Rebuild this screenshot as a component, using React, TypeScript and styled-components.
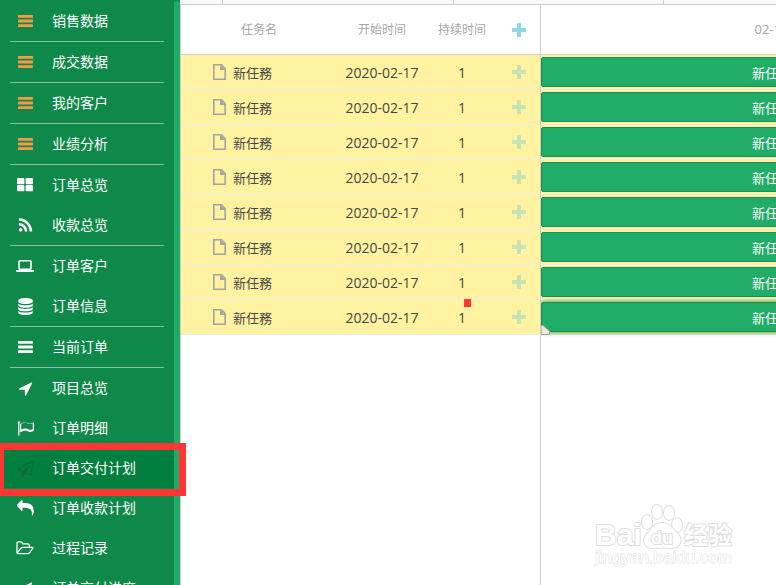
import React from "react";
import styled, { createGlobalStyle } from "styled-components";

const GlobalStyle = createGlobalStyle`
  *, *::before, *::after { box-sizing: border-box; }
  body {
    margin: 0;
    background: #ffffff;
    font-family: "Open Sans", "Noto Sans CJK SC", sans-serif;
  }
`;

const Shell = styled.div`
  position: relative;
  display: flex;
  height: 100vh;
  overflow: hidden;
`;

/* ---------- Sidebar ---------- */

const Sidebar = styled.nav`
  flex: none;
  display: flex;
  width: 180px;
  background: #0f894a;
`;

const Menu = styled.ul`
  flex: 1;
  margin: 0;
  padding: 1px 0 0;
  list-style: none;
`;

const ScrollTrack = styled.div`
  width: 6px;
  padding-top: 1px;
`;

const ScrollThumb = styled.div`
  height: 100%;
  border-radius: 3px 3px 0 0;
  background: #20ac66;
`;

const Divider = styled.li`
  height: 1px;
  margin: 0 10px;
  background: #85c1a1;
`;

const MenuLink = styled.a<{ $active?: boolean }>`
  display: flex;
  align-items: center;
  gap: 18px;
  height: 40px;
  padding-left: 16px;
  background: ${(p) => (p.$active ? "#007f3e" : "transparent")};
  color: #ffffff;
  font-family: "Noto Sans CJK SC", sans-serif;
  font-size: 14px;
  line-height: 20px;
  text-decoration: none;
  white-space: nowrap;
`;

const MenuLabel = styled.span`
  padding-bottom: 2px;
`;

const IconSlot = styled.span<{ $color: string }>`
  display: flex;
  justify-content: center;
  width: 18px;
  color: ${(p) => p.$color};
`;

const Glyph = styled.svg`
  display: block;
  fill: currentColor;
`;

const glyphs: Record<string, string> = {
  rss: "M576 1344q0 80-56 136t-136 56-136-56-56-136 56-136 136-56 136 56 56 136zm512 123q2 28-17 48-18 21-47 21h-135q-25 0-43-16.5t-20-41.5q-22-229-184.5-391.5t-391.5-184.5q-25-2-41.5-20t-16.5-43v-135q0-29 21-47 17-17 43-17h5q160 13 306 80.5t259 181.5q114 113 181.5 259t80.5 306zm512 2q2 27-18 47-18 20-46 20h-143q-26 0-44.5-17.5t-19.5-42.5q-12-215-101-408.5t-231.5-336-336-231.5-408.5-102q-25-1-42.5-19.5t-17.5-43.5v-143q0-28 20-46 18-18 44-18h3q262 13 501.5 120t425.5 294q187 186 294 425.5t120 501.5z",
  database:
    "M896 768q237 0 443-43t325-127v170q0 69-103 128t-280 93.5-385 34.5-385-34.5-280-93.5-103-128v-170q119 84 325 127t443 43zm0 768q237 0 443-43t325-127v170q0 69-103 128t-280 93.5-385 34.5-385-34.5-280-93.5-103-128v-170q119 84 325 127t443 43zm0-384q237 0 443-43t325-127v170q0 69-103 128t-280 93.5-385 34.5-385-34.5-280-93.5-103-128v-170q119 84 325 127t443 43zm0-1152q208 0 385 34.5t280 93.5 103 128v128q0 69-103 128t-280 93.5-385 34.5-385-34.5-280-93.5-103-128v-128q0-69 103-128t280-93.5 385-34.5z",
  arrow:
    "M1593 349l-640 1280q-17 35-57 35-5 0-15-2-22-5-35.5-22.5t-13.5-39.5v-576h-576q-22 0-39.5-13.5t-22.5-35.5 4-42 29-30l1280-640q13-7 29-7 27 0 45 19 15 14 18.5 34.5t-6.5 39.5z",
  flag: "M1664 946v-616q-169 91-306 91-82 0-145-32-100-49-184-76.5t-178-27.5q-173 0-403 127v599q245-113 433-113 55 0 103.5 7.5t98 26 77 31 82.5 39.5l28 14q44 22 101 22 120 0 293-92zm-1344-690q0 35-17.5 64t-46.5 46v1266q0 14-9 23t-23 9h-64q-14 0-23-9t-9-23v-1266q-29-17-46.5-46t-17.5-64q0-53 37.5-90.5t90.5-37.5 90.5 37.5 37.5 90.5zm1472 64v763q0 39-35 57-10 5-17 9-218 116-369 116-88 0-158-35l-28-14q-64-33-99-48t-91-29-114-14q-102 0-235.5 44t-228.5 102q-15 9-33 9-16 0-32-8-32-20-32-56v-742q0-35 31-55 35-21 78.5-42.5t114-52 152.5-49.5 155-19q112 0 209 31t209 86q38 19 89 19 122 0 310-112 22-12 31-17 31-16 62 2 31 20 31 54z",
  plane:
    "M1764 11q33 24 27 64l-256 1536q-5 29-32 45-14 8-31 8-11 0-24-5l-527-215-298 327q-18 21-47 21-14 0-23-4-19-7-30-23.5t-11-36.5v-452l-472-193q-37-14-40-55-3-39 32-59l1664-960q35-21 68 2zm-342 1499l221-1323-1434 827 336 137 863-639-478 797z",
  reply:
    "M1792 1120q0 166-127 451-3 7-10.5 24t-13.5 30-13 22q-12 17-28 17-15 0-23.5-10t-8.5-25q0-9 2.5-26.5t2.5-23.5q5-68 5-123 0-112-19.5-200.5t-54-153.5-88-112-115-80-143-50-164-25.5-186.5-7.5h-224v256q0 26-19 45t-45 19-45-19l-512-512q-19-19-19-45t19-45l512-512q19-19 45-19t45 19 19 45v256h224q713 0 875 403 53 134 53 333z",
};

function MenuIcon({ name }: { name: string }) {
  if (name === "bars") {
    return (
      <Glyph width="15" height="12" viewBox="0 0 15 12" aria-hidden="true">
        <rect width="15" height="2.8" rx="0.6" />
        <rect y="4.6" width="15" height="2.8" rx="0.6" />
        <rect y="9.2" width="15" height="2.8" rx="0.6" />
      </Glyph>
    );
  }
  if (name === "tiles") {
    return (
      <Glyph width="16" height="14" viewBox="0 0 16 14" aria-hidden="true">
        <rect width="7.4" height="6.2" rx="1" />
        <rect x="8.6" width="7.4" height="6.2" rx="1" />
        <rect y="7" width="7.4" height="6.2" rx="1" />
        <rect x="8.6" y="7" width="7.4" height="6.2" rx="1" />
      </Glyph>
    );
  }
  if (name === "laptop") {
    return (
      <Glyph width="18" height="12" viewBox="0 0 18 12" aria-hidden="true">
        <rect x="3" y="0.8" width="12" height="8.4" rx="1" fill="none" stroke="currentColor" strokeWidth="1.6" />
        <path d="M0 10H18V11Q18 12 16.5 12H1.5Q0 12 0 11Z" />
      </Glyph>
    );
  }
  if (name === "folder") {
    return (
      <Glyph width="18" height="14" viewBox="0 0 18 14" aria-hidden="true">
        <path
          d="M1 11.5V2.2Q1 0.9 2.3 0.9H5.2Q6.4 0.9 6.4 2.8H11.8Q13.3 2.8 13.3 4.2V6.2M1.2 12L5 7.2Q5.8 6.3 6.8 6.3H16.2Q17.4 6.3 16.7 7.3L13.6 11.6Q12.8 12.7 11.8 12.7H2.2Q1 12.7 1 11.5"
          fill="none"
          stroke="currentColor"
          strokeWidth="1.3"
          strokeLinejoin="round"
        />
      </Glyph>
    );
  }
  return (
    <Glyph width="17" height="17" viewBox="0 0 1792 1792" aria-hidden="true">
      <path d={glyphs[name]} />
    </Glyph>
  );
}

type Entry = {
  label: string;
  icon: string;
  color?: string;
  line?: boolean;
  active?: boolean;
};

const orange = "#f79a48";

const entries: Entry[] = [
  { label: "销售数据", icon: "bars", color: orange, line: true },
  { label: "成交数据", icon: "bars", color: orange, line: true },
  { label: "我的客户", icon: "bars", color: orange, line: true },
  { label: "业绩分析", icon: "bars", color: orange, line: true },
  { label: "订单总览", icon: "tiles" },
  { label: "收款总览", icon: "rss", line: true },
  { label: "订单客户", icon: "laptop" },
  { label: "订单信息", icon: "database", line: true },
  { label: "当前订单", icon: "bars", line: true },
  { label: "项目总览", icon: "arrow" },
  { label: "订单明细", icon: "flag" },
  { label: "订单交付计划", icon: "plane", color: "#0a6c38", active: true },
  { label: "订单收款计划", icon: "reply" },
  { label: "过程记录", icon: "folder" },
  { label: "订单交付进度", icon: "arrow" },
];

/* ---------- Gantt ---------- */

const Main = styled.main`
  flex: 1;
  min-width: 0;
  display: flex;
  flex-direction: column;
`;

const TopStrip = styled.div`
  flex: none;
  display: flex;
  height: 5px;
  border-bottom: 1px solid #cecece;
  background: #f8f8f8;
`;

const StripCell = styled.div<{ $width: number }>`
  width: ${(p) => p.$width}px;
  border-right: 1px solid #cecece;
`;

const Gantt = styled.div`
  flex: 1;
  display: flex;
  min-height: 0;
  border-left: 1px solid #cecece;
`;

const GridPane = styled.section`
  flex: none;
  width: 360px;
  border-right: 1px solid #cecece;
`;

const GridTable = styled.table`
  width: 100%;
  table-layout: fixed;
  border-collapse: separate;
  border-spacing: 0;
`;

const HeadCell = styled.th`
  height: 50px;
  padding: 0;
  border-bottom: 1px solid #cecece;
  color: #a6a6a6;
  font-size: 12px;
  font-weight: 400;
  line-height: 20px;
  text-align: center;
`;

const Cell = styled.td`
  height: 35px;
  padding: 0;
  border-bottom: 1px solid #ebebeb;
  background: #fff3a1;
  color: #454545;
  font-size: 14px;
  line-height: 20px;
  text-align: center;
`;

const TextCell = styled(Cell)`
  padding-top: 2px;
`;

const TaskName = styled.span`
  display: flex;
  align-items: center;
  gap: 7px;
  padding-left: 32px;
  font-family: "Noto Sans CJK TC", sans-serif;
  font-size: 13px;
`;

const TaskLabel = styled.span`
  padding-top: 2px;
`;

const AddButton = styled.button<{ $color: string }>`
  display: block;
  margin: 0 auto;
  padding: 0;
  border: 0;
  background: none;
  color: ${(p) => p.$color};
  cursor: pointer;
`;

const PlusIcon = () => (
  <Glyph width="14" height="14" viewBox="0 0 14 14" aria-hidden="true">
    <rect x="5" width="4" height="14" rx="0.6" />
    <rect y="5" width="14" height="4" rx="0.6" />
  </Glyph>
);

const FileIcon = () => (
  <svg width="13" height="16" viewBox="0 0 13 16" aria-hidden="true">
    <path d="M0.8 0.8H8.5L12.2 4.5V15.2H0.8Z" fill="none" stroke="#a3a3a3" strokeWidth="1.6" />
    <path d="M7 0.5V6H12.5Z" fill="#a3a3a3" />
  </svg>
);

const Timeline = styled.section`
  position: relative;
  flex: 1;
  min-width: 0;
  overflow: hidden;
`;

const TimelineScale = styled.div`
  display: flex;
  height: 50px;
  border-bottom: 1px solid #cecece;
`;

const DayLabel = styled.div`
  flex: none;
  width: 461px;
  color: #a6a6a6;
  font-size: 13px;
  line-height: 49px;
  text-align: center;
`;

const TimelineRow = styled.div`
  display: flex;
  align-items: flex-start;
  height: 35px;
  padding-top: 2px;
  border-bottom: 1px solid #ebebeb;
  background: #fff3a1;
`;

const TaskBar = styled.div<{ $selected: boolean }>`
  flex: none;
  width: 461px;
  height: 30px;
  border: 1px solid #1a8d50;
  border-radius: 2px;
  background: #21ad67;
  box-shadow: ${(p) => (p.$selected ? "0 0 5px #1a8d50" : "none")};
  color: #ffffff;
  font-family: "Noto Sans CJK TC", sans-serif;
  font-size: 13px;
  line-height: 30px;
  text-align: center;
`;

const CornerMark = styled.svg`
  position: absolute;
  left: 0;
  top: 320px;
`;

/* ---------- Overlays ---------- */

const Highlight = styled.div`
  position: absolute;
  left: 0;
  top: 443px;
  width: 186px;
  height: 53px;
  border: 7px solid #fe3634;
  border-left-width: 4px;
  pointer-events: none;
`;

const RedMark = styled.div`
  position: absolute;
  left: 464px;
  top: 299px;
  width: 7px;
  height: 8px;
  background: #fe3634;
`;

const Watermark = styled.svg`
  position: absolute;
  right: 40px;
  bottom: 16px;
  fill: #ffffff;
  stroke: #dedede;
  stroke-width: 2px;
  paint-order: stroke;
  stroke-linejoin: round;
  font-family: "Liberation Sans", "Noto Sans CJK SC", sans-serif;
`;

const tasks = Array.from({ length: 8 }, (_, id) => ({
  id,
  name: "新任務",
  start: "2020-02-17",
  duration: 1,
}));

export default function App() {
  return (
    <>
      <GlobalStyle />
      <Shell>
        <Sidebar>
          <Menu>
            {entries.map((e) => (
              <React.Fragment key={e.label}>
                <li>
                  <MenuLink href="#" $active={e.active}>
                    <IconSlot $color={e.color ?? "#ffffff"}>
                      <MenuIcon name={e.icon} />
                    </IconSlot>
                    <MenuLabel>{e.label}</MenuLabel>
                  </MenuLink>
                </li>
                {e.line && <Divider role="separator" />}
              </React.Fragment>
            ))}
          </Menu>
          <ScrollTrack>
            <ScrollThumb />
          </ScrollTrack>
        </Sidebar>

        <Main>
          <TopStrip>
            <StripCell $width={43} />
            <StripCell $width={231} />
            <StripCell $width={210} />
          </TopStrip>
          <Gantt>
            <GridPane>
              <GridTable>
                <colgroup>
                  <col width="156" />
                  <col width="90" />
                  <col width="70" />
                  <col />
                </colgroup>
                <thead>
                  <tr>
                    <HeadCell>任务名</HeadCell>
                    <HeadCell>开始时间</HeadCell>
                    <HeadCell>持续时间</HeadCell>
                    <HeadCell>
                      <AddButton type="button" $color="#8fd6e6" aria-label="新增任务">
                        <PlusIcon />
                      </AddButton>
                    </HeadCell>
                  </tr>
                </thead>
                <tbody>
                  {tasks.map((t) => (
                    <tr key={t.id}>
                      <Cell>
                        <TaskName>
                          <FileIcon />
                          <TaskLabel>{t.name}</TaskLabel>
                        </TaskName>
                      </Cell>
                      <TextCell>{t.start}</TextCell>
                      <TextCell>{t.duration}</TextCell>
                      <Cell>
                        <AddButton type="button" $color="#c6e3b5" aria-label="新增子任务">
                          <PlusIcon />
                        </AddButton>
                      </Cell>
                    </tr>
                  ))}
                </tbody>
              </GridTable>
            </GridPane>
            <Timeline>
              <TimelineScale>
                <DayLabel>02-17</DayLabel>
              </TimelineScale>
              {tasks.map((t) => (
                <TimelineRow key={t.id}>
                  <TaskBar $selected={t.id === tasks.length - 1}>{t.name}</TaskBar>
                </TimelineRow>
              ))}
              <CornerMark width="9" height="10" viewBox="0 0 9 10" aria-hidden="true">
                <path d="M0 0.5H2L8.5 6V9.5H0Z" fill="#ebe9e0" stroke="#9c9c9c" />
              </CornerMark>
            </Timeline>
          </Gantt>
        </Main>

        <Highlight />
        <RedMark />
        <Watermark width="142" height="70" viewBox="0 0 142 70" aria-hidden="true">
          <ellipse cx="53" cy="23" rx="5" ry="7" />
          <ellipse cx="63" cy="13" rx="5" ry="7" />
          <ellipse cx="75" cy="14" rx="5" ry="7" />
          <ellipse cx="83" cy="26" rx="5" ry="7" />
          <path d="M68 24C60 24 58 30 54 34C46 41 51 50 60 49Q68 48 76 49C86 50 90 41 83 34C78 30 77 24 68 24Z" />
          <text x="1" y="46" fontSize="30" fontWeight="700">Bai</text>
          <text x="57" y="45" fontSize="18" fontWeight="700">du</text>
          <text x="90" y="45" fontSize="24" fontWeight="700">经验</text>
          <text x="1" y="64" fontSize="17" strokeWidth="1">jingyan.baidu.com</text>
        </Watermark>
      </Shell>
    </>
  );
}
